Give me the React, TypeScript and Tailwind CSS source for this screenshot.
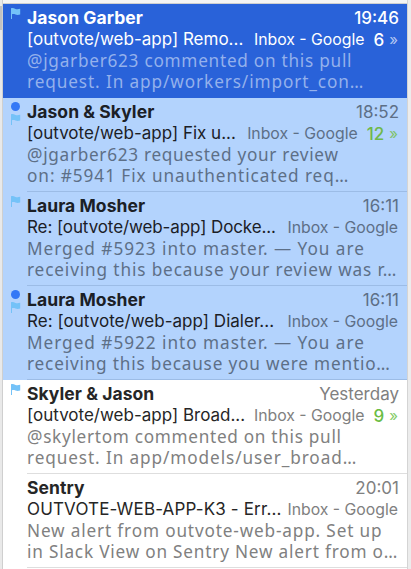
type Mail = {
  name: string;
  time: string;
  subject: string;
  subjectCls: string;
  count?: string;
  unread?: boolean;
  flag?: boolean;
  preview: [string, string];
  previewCls: [string, string];
  tone: "active" | "selected" | "plain";
};

const mails: Mail[] = [
  { name: "Jason Garber", time: "19:46", subject: "[outvote/web-app] Remo...", subjectCls: "", count: "6", flag: true, preview: ["@jgarber623 commented on this pull", "request. In app/workers/import_con…"], previewCls: ["tracking-[0.74px]", "tracking-[0.9px]"], tone: "active" },
  { name: "Jason & Skyler", time: "18:52", subject: "[outvote/web-app] Fix u...", subjectCls: "", count: "12", unread: true, flag: true, preview: ["@jgarber623 requested your review", "on: #5941 Fix unauthenticated req…"], previewCls: ["tracking-[0.7px]", "tracking-[0.93px]"], tone: "selected" },
  { name: "Laura Mosher", time: "16:11", subject: "Re: [outvote/web-app] Docke...", subjectCls: "tracking-[-0.1px]", flag: true, preview: ["Merged #5923 into master. — You are", "receiving this because your review was r…"], previewCls: ["tracking-[0.97px]", "tracking-[0.87px]"], tone: "selected" },
  { name: "Laura Mosher", time: "16:11", subject: "Re: [outvote/web-app] Dialer...", subjectCls: "tracking-[0.03px]", unread: true, flag: true, preview: ["Merged #5922 into master. — You are", "receiving this because you were mentio…"], previewCls: ["tracking-[0.97px]", "tracking-[0.81px]"], tone: "selected" },
  { name: "Skyler & Jason", time: "Yesterday", subject: "[outvote/web-app] Broad...", subjectCls: "", count: "9", flag: true, preview: ["@skylertom commented on this pull", "request. In app/models/user_broad…"], previewCls: ["tracking-[0.7px]", "tracking-[0.9px]"], tone: "plain" },
  { name: "Sentry", time: "20:01", subject: "OUTVOTE-WEB-APP-K3 - Err...", subjectCls: "tracking-[0.15px]", preview: ["New alert from outvote-web-app. Set up", "in Slack View on Sentry New alert from o…"], previewCls: ["tracking-[0.84px]", "tracking-[0.8px]"], tone: "plain" },
];

const tones = {
  active: { row: "bg-[#2962d9]", main: "text-white", meta: "text-white", body: "text-[#94b1ec]", count: "text-white", chev: "text-[#b4c8f2]", line: "border-[#2962d9]" },
  selected: { row: "bg-[#b3d3fd]", main: "text-[#1b2026]", meta: "text-[#5d6f87]", body: "text-[#5d6f87]", count: "text-[#6fb84a]", chev: "text-[#7fc268]", line: "border-[#9cbce6]" },
  plain: { row: "bg-white", main: "text-[#262626]", meta: "text-[#808080]", body: "text-[#808080]", count: "text-[#6bbd45]", chev: "text-[#84cb66]", line: "border-[#dedede]" },
};

function Flag() {
  return (
    <svg width="10" height="11" viewBox="0 0 10 11" className="block">
      <path d="M0 0.2C2 -0.3 3 0.3 4.5 0.9C6 1.4 7.5 1.2 9.2 0.7V6.4C7.5 7 6 7.1 4.5 6.5C3 5.9 2 5.9 1 6.2V11H0Z" fill="#74c2f8" />
    </svg>
  );
}

function Row({ mail }: { mail: Mail }) {
  const t = tones[mail.tone];
  const active = mail.tone === "active";
  return (
    <article className={`flex h-[94px] shrink-0 ${t.row}`}>
      <div className="flex w-6 shrink-0 flex-col pl-2 pt-[4px]">
        {mail.unread && <span className="mb-[3px] h-[9px] w-[9px] rounded-full bg-[#3478f6]" />}
        {mail.flag && <Flag />}
      </div>
      <div className={`flex flex-1 flex-col border-b whitespace-nowrap pt-[3px] ${t.line}`}>
        <div className="flex h-[22px] items-center justify-between pr-2 text-[17px] leading-[22px]">
          <span className={`text-[17.5px] font-bold tracking-[0.06px] ${t.main}`}>{mail.name}</span>
          <span className={`${t.meta} ${active ? "font-medium" : ""}`}>{mail.time}</span>
        </div>
        <div className="flex h-[21px] items-center pr-[9px] leading-[21px]">
          <span className={`text-[17px] ${t.main} ${mail.subjectCls}`}>{mail.subject}</span>
          <span className={`ml-auto text-[15.8px] ${t.meta}`}>Inbox - Google</span>
          {mail.count && (
            <>
              <span className={`ml-[9px] pt-[2px] text-[17px] font-medium ${t.count}`}>{mail.count}</span>
              <span className={`ml-[5px] text-[15px] ${t.chev}`}>»</span>
            </>
          )}
        </div>
        <div className={`font-['Noto_Sans',sans-serif] text-[17.2px] leading-[21px] ${t.body}`}>
          <p className={mail.previewCls[0]}>{mail.preview[0]}</p>
          <p className={mail.previewCls[1]}>{mail.preview[1]}</p>
        </div>
      </div>
    </article>
  );
}

export default function App() {
  return (
    <main className="flex h-[569px] w-[411px] overflow-hidden bg-[#ececec] font-['Inter',sans-serif]">
      <div className="flex w-[3px] shrink-0 flex-col border-r border-[#cfcfcf] bg-[#e9e9e9]">
        <div className="mt-[6px] h-6 bg-[#c2c2c2]" />
      </div>
      <div className="flex w-[404px] shrink-0 flex-col overflow-hidden bg-white">
        <div className="h-1 shrink-0 border-b border-[#cfcfcf] bg-[#f4f4f4]" />
        {mails.map((mail, i) => (
          <Row key={i} mail={mail} />
        ))}
      </div>
      <div className="w-1 shrink-0 border-l border-[#d4d4d4] bg-[#ececec]" />
    </main>
  );
}
